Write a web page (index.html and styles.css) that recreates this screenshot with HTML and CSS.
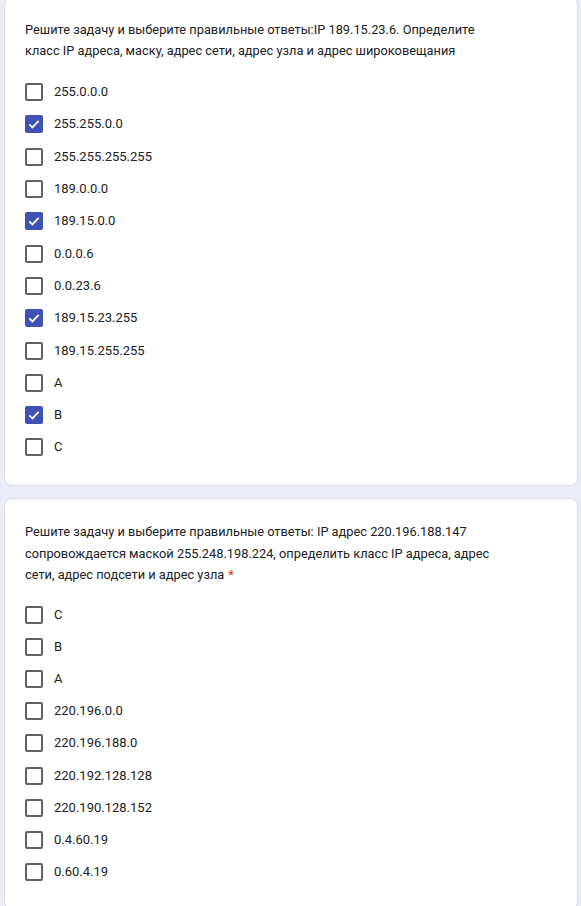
FILE: index.html
```html
<!DOCTYPE html>
<html lang="ru">
<head>
<meta charset="utf-8">
<link rel="stylesheet" href="styles.css">
</head>
<body>
<div class="page">
  <div class="card first">
    <div class="question">Решите задачу и выберите правильные ответы:IP 189.15.23.6. Определите класс IP адреса, маску, адрес сети, адрес узла и адрес широковещания</div>
    <div class="options">
      <div class="opt"><span class="box"></span><span class="label">255.0.0.0</span></div>
      <div class="opt"><span class="box checked"><svg viewBox="0 0 18 18" width="18" height="18"><path d="M4.3 9.3l3.1 3.1 6.3-6.6" fill="none" stroke="#fff" stroke-width="1.8"/></svg></span><span class="label">255.255.0.0</span></div>
      <div class="opt"><span class="box"></span><span class="label">255.255.255.255</span></div>
      <div class="opt"><span class="box"></span><span class="label">189.0.0.0</span></div>
      <div class="opt"><span class="box checked"><svg viewBox="0 0 18 18" width="18" height="18"><path d="M4.3 9.3l3.1 3.1 6.3-6.6" fill="none" stroke="#fff" stroke-width="1.8"/></svg></span><span class="label">189.15.0.0</span></div>
      <div class="opt"><span class="box"></span><span class="label">0.0.0.6</span></div>
      <div class="opt"><span class="box"></span><span class="label">0.0.23.6</span></div>
      <div class="opt"><span class="box checked"><svg viewBox="0 0 18 18" width="18" height="18"><path d="M4.3 9.3l3.1 3.1 6.3-6.6" fill="none" stroke="#fff" stroke-width="1.8"/></svg></span><span class="label">189.15.23.255</span></div>
      <div class="opt"><span class="box"></span><span class="label">189.15.255.255</span></div>
      <div class="opt"><span class="box"></span><span class="label">A</span></div>
      <div class="opt"><span class="box checked"><svg viewBox="0 0 18 18" width="18" height="18"><path d="M4.3 9.3l3.1 3.1 6.3-6.6" fill="none" stroke="#fff" stroke-width="1.8"/></svg></span><span class="label">B</span></div>
      <div class="opt"><span class="box"></span><span class="label">C</span></div>
    </div>
  </div>
  <div class="card second">
    <div class="question">Решите задачу и выберите правильные ответы: IP адрес 220.196.188.147 сопровождается маской 255.248.198.224, определить класс IP адреса, адрес сети, адрес подсети и адрес узла<span class="req">*</span></div>
    <div class="options">
      <div class="opt"><span class="box"></span><span class="label">C</span></div>
      <div class="opt"><span class="box"></span><span class="label">B</span></div>
      <div class="opt"><span class="box"></span><span class="label">A</span></div>
      <div class="opt"><span class="box"></span><span class="label">220.196.0.0</span></div>
      <div class="opt"><span class="box"></span><span class="label">220.196.188.0</span></div>
      <div class="opt"><span class="box"></span><span class="label">220.192.128.128</span></div>
      <div class="opt"><span class="box"></span><span class="label">220.190.128.152</span></div>
      <div class="opt"><span class="box"></span><span class="label">0.4.60.19</span></div>
      <div class="opt"><span class="box"></span><span class="label">0.60.4.19</span></div>
    </div>
  </div>
</div>
</body>
</html>
```
FILE: styles.css
```css
html, body {
  margin: 0;
  padding: 0;
  background: #eaedf6;
  overflow: hidden;
}
body {
  font-family: Roboto, "Noto Sans", Arial, sans-serif;
  color: #202124;
}
.page {
  padding: 0 3px 0 4px;
  display: flex;
  flex-direction: column;
  gap: 12px;
}
.card {
  background: #fff;
  border: 1px solid #dadce0;
  border-radius: 8px;
  padding: 21.5px 20px 21px 20px;
}
.card.first {
  margin-top: -4px;
}
.card.second {
  padding-top: 22.5px;
}
.question {
  font-size: 12.8px;
  line-height: 21.5px;
  max-width: 482px;
}
.req {
  color: #d93025;
  margin-left: 4px;
}
.options {
  margin-top: 14.5px;
  display: flex;
  flex-direction: column;
}
.second .options {
  margin-top: 13px;
}
.opt {
  height: 32.3px;
  display: flex;
  align-items: center;
  gap: 11px;
  font-size: 13px;
}
.second .opt {
  height: 32.2px;
}
.box {
  width: 18px;
  height: 18px;
  box-sizing: border-box;
  border: 2px solid #5f6368;
  border-radius: 2px;
  flex: none;
  display: flex;
}
.box.checked {
  background: #3f51b5;
  border-color: #3f51b5;
}
.box.checked svg {
  margin: -2px;
}
.label {
  line-height: 16px;
}
```
